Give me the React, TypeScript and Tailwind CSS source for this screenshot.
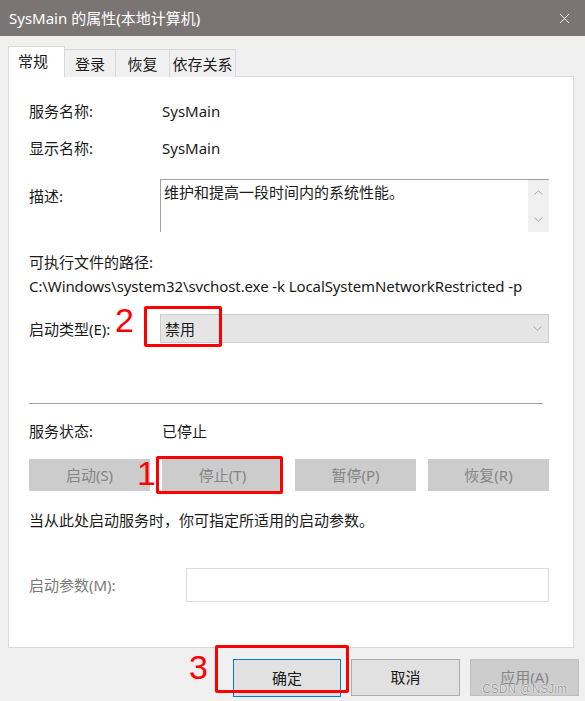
import { X } from 'lucide-react';

const font = { fontFamily: '"Noto Sans", "Noto Sans CJK SC", sans-serif' };

const tabs = [
  { label: '登录', w: 'w-[51px]' },
  { label: '恢复', w: 'w-[54px]' },
  { label: '依存关系', w: 'w-[66px]' },
];

const serviceButtons = ['启动(S)', '停止(T)', '暂停(P)', '恢复(R)'];

function Chevron({ up }: { up?: boolean }) {
  return (
    <svg width="9" height="5" viewBox="0 0 9 5" className="block">
      <path
        d={up ? 'M0.5 4.5 L4.5 0.8 L8.5 4.5' : 'M0.5 0.5 L4.5 4.2 L8.5 0.5'}
        fill="none"
        stroke="#a6a6a6"
        strokeWidth="1"
      />
    </svg>
  );
}

export default function App() {
  return (
    <div
      className="relative w-[585px] h-[701px] overflow-hidden bg-[#f0f0f0] text-[15px] text-[#1a1a1a]"
      style={font}
    >
      {/* Title bar */}
      <div className="h-[36px] bg-[#7a7574] flex items-center justify-between pl-[9px] pr-[12px] text-white">
        <span className="text-[15px] leading-none">SysMain 的属性(本地计算机)</span>
        <X className="w-[17px] h-[17px] text-white" strokeWidth={1.2} />
      </div>

      {/* Tabs */}
      <div className="flex items-end mt-[10px] ml-[8px] h-[31px]">
        <div className="w-[57px] h-[31px] bg-white border-l border-t border-r border-[#d9d9d9] pl-[9px] leading-[28px] relative z-10">
          常规
        </div>
        {tabs.map(({ label, w }) => (
          <div
            key={label}
            className={`${w} h-[28px] border-t border-r border-[#d9d9d9] bg-[#f0f0f0] text-center leading-[28px]`}
          >
            {label}
          </div>
        ))}
      </div>

      {/* Panel */}
      <div className="ml-[8px] w-[566px] h-[572px] -mt-px bg-white border border-[#d9d9d9] pl-[20px] pr-[24px] pt-[23px] leading-[22px]">
        <div className="flex">
          <span className="w-[133px]">服务名称:</span>
          <span>SysMain</span>
        </div>
        <div className="flex mt-[15px]">
          <span className="w-[133px]">显示名称:</span>
          <span>SysMain</span>
        </div>
        <div className="flex mt-[20px]">
          <span className="w-[131px] mt-[6px]">描述:</span>
          <div className="flex-1 h-[53px] border-l border-t border-[#a0a0a0] flex">
            <div className="flex-1 pl-[3px] pt-[1px]">维护和提高一段时间内的系统性能。</div>
            <div className="w-[21px] bg-[#f0f0f0] flex flex-col items-center justify-between py-[10px]">
              <Chevron up />
              <Chevron />
            </div>
          </div>
        </div>
        <div className="mt-[19px]">可执行文件的路径:</div>
        <div className="mt-[2px] tracking-[-0.1px]">
          C:\Windows\system32\svchost.exe -k LocalSystemNetworkRestricted -p
        </div>
        <div className="flex items-center mt-[17px]">
          <span className="w-[131px]">启动类型(E):</span>
          <div className="flex-1 h-[29px] bg-[#e5e5e5] border border-[#cccccc] flex items-center justify-between pl-[4px] pr-[6px]">
            <span>禁用</span>
            <Chevron />
          </div>
        </div>

        <div className="h-px bg-[#a0a0a0] mt-[60px] mr-[6px]" />

        <div className="flex mt-[16px]">
          <span className="w-[133px]">服务状态:</span>
          <span>已停止</span>
        </div>
        <div className="grid grid-cols-4 gap-[12px] mt-[17px]">
          {serviceButtons.map((b) => (
            <div
              key={b}
              className="h-[32px] bg-[#cccccc] text-[#858585] flex items-center justify-center"
            >
              {b}
            </div>
          ))}
        </div>
        <div className="mt-[18px]">当从此处启动服务时，你可指定所适用的启动参数。</div>
        <div className="flex items-center mt-[37px]">
          <span className="w-[157px] text-[#7a7a7a]">启动参数(M):</span>
          <div className="flex-1 h-[34px] border border-[#dcdcdc]" />
        </div>
      </div>

      {/* Bottom buttons */}
      <div className="flex justify-end gap-[10px] pr-[6px] mt-[11px]">
        <div className="w-[108px] h-[38px] bg-[#e1e1e1] border border-[#0078d7] flex items-center justify-center">
          确定
        </div>
        <div className="w-[109px] h-[37px] bg-[#e1e1e1] border border-[#adadad] flex items-center justify-center">
          取消
        </div>
        <div className="w-[109px] h-[37px] bg-[#cccccc] border border-[#bfbfbf] text-[#858585] flex items-center justify-center">
          应用(A)
        </div>
      </div>

      {/* Annotations */}
      <div className="absolute left-[144px] top-[306px] w-[78px] h-[41px] border-[3px] border-[#ff0000] rounded-[2px]" />
      <div className="absolute left-[115px] top-[300px] text-[34px] leading-[40px] text-[#ff0000]" style={{ fontFamily: '"Liberation Sans", sans-serif' }}>
        2
      </div>
      <div className="absolute left-[156px] top-[456px] w-[127px] h-[38px] border-[3px] border-[#ff0000] rounded-[2px]" />
      <div className="absolute left-[137px] top-[453px] text-[34px] leading-[40px] text-[#ff0000]" style={{ fontFamily: '"Liberation Sans", sans-serif' }}>
        1
      </div>
      <div className="absolute left-[215px] top-[645px] w-[134px] h-[48px] border-[3px] border-[#ff0000] rounded-[2px]" />
      <div className="absolute left-[189px] top-[647px] text-[34px] leading-[40px] text-[#ff0000]" style={{ fontFamily: '"Liberation Sans", sans-serif' }}>
        3
      </div>
      <div
        className="absolute right-[18px] bottom-[6px] text-[12px] leading-none text-[#9a9a9a]"
        style={{ fontFamily: '"Liberation Sans", sans-serif', textShadow: '0 0 1px #fff, 0 0 1px #fff' }}
      >
        CSDN @NSJim
      </div>
    </div>
  );
}
